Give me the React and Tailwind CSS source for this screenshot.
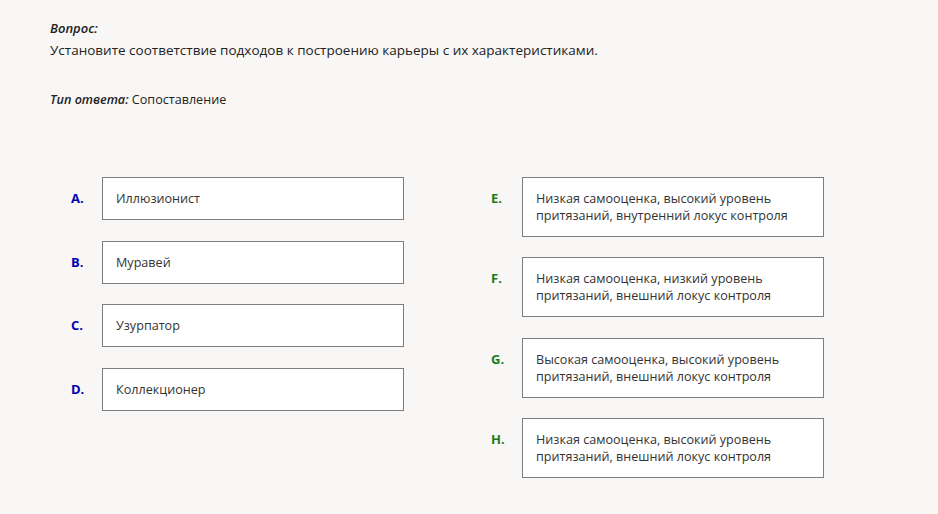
import React from "react";

const left = [
  { key: "A.", text: "Иллюзионист" },
  { key: "B.", text: "Муравей" },
  { key: "C.", text: "Узурпатор" },
  { key: "D.", text: "Коллекционер" },
];

const right = [
  { key: "E.", text: "Низкая самооценка, высокий уровень притязаний, внутренний локус контроля" },
  { key: "F.", text: "Низкая самооценка, низкий уровень притязаний, внешний локус контроля" },
  { key: "G.", text: "Высокая самооценка, высокий уровень притязаний, внешний локус контроля" },
  { key: "H.", text: "Низкая самооценка, высокий уровень притязаний, внешний локус контроля" },
];

function Item({ label, text, labelClass }) {
  return (
    <div className="flex items-start">
      <div className={`w-[31px] pt-[13px] text-[13px] leading-[17px] font-bold ${labelClass}`}>{label}</div>
      <div className="w-[302px] border border-[#7d7d7d] bg-white px-[13px] py-[12px] text-[12.6px] leading-[17px] text-[#333]">
        {text}
      </div>
    </div>
  );
}

export default function App() {
  return (
    <div
      className="min-h-[514px] w-[938px] bg-[#f8f7f5] text-[#222]"
      style={{ fontFamily: '"Open Sans", "Noto Sans", sans-serif' }}
    >
      <div className="pl-[50px] pt-[20px]">
        <div className="text-[13px] leading-[17px] font-semibold italic text-[#222]">Вопрос:</div>
        <div className="mt-[5px] text-[13.5px] leading-[17px]">
          Установите соответствие подходов к построению карьеры с их характеристиками.
        </div>
        <div className="mt-[32px] text-[12.6px] leading-[17px]">
          <span className="font-semibold italic">Тип ответа:</span> Сопоставление
        </div>
      </div>
      <div className="mt-[69px] flex pl-[71px]">
        <div className="flex w-[420px] flex-col gap-[20.7px]">
          {left.map((it) => (
            <Item key={it.key} label={it.key} text={it.text} labelClass="text-[#0000b0]" />
          ))}
        </div>
        <div className="flex flex-col gap-[20.3px]">
          {right.map((it) => (
            <Item key={it.key} label={it.key} text={it.text} labelClass="text-[#1a7a1a]" />
          ))}
        </div>
      </div>
    </div>
  );
}
